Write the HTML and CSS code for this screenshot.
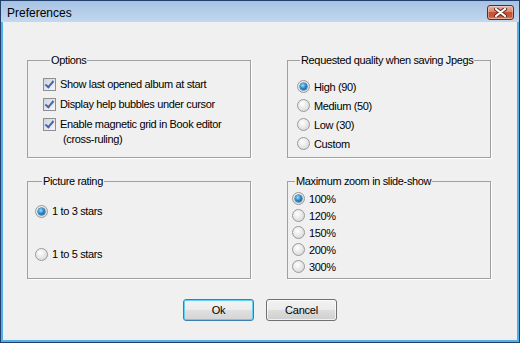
FILE: index.html
```html
<!DOCTYPE html>
<html lang="en">
<head>
    <meta charset="UTF-8">
    <title>Preferences</title>
    <link rel="stylesheet" href="styles.css">
</head>
<body>
    <div class="window">
        <div class="titlebar">
            <span class="title">Preferences</span>
            <span class="close-btn">
                <svg width="13" height="9" viewBox="0 0 13 9">
                    <path d="M2 1 L11 8 M11 1 L2 8" stroke="#5a2a22" stroke-width="4" stroke-linecap="round"/>
                    <path d="M2 1 L11 8 M11 1 L2 8" stroke="#fff" stroke-width="2.2" stroke-linecap="round"/>
                </svg>
            </span>
        </div>

        <div class="client">
            <div class="groups">
                <fieldset class="group options">
                    <legend>Options</legend>
                    <div class="check-row"><span class="checkbox"></span><span class="text">Show last opened album at start</span></div>
                    <div class="check-row"><span class="checkbox"></span><span class="text">Display help bubbles under cursor</span></div>
                    <div class="check-row"><span class="checkbox"></span><span class="text two-line">Enable magnetic grid in Book editor<br><span class="indent">(cross-ruling)</span></span></div>
                </fieldset>

                <fieldset class="group right quality">
                    <legend>Requested quality when saving Jpegs</legend>
                    <div class="radio-row"><span class="radio on"></span>High (90)</div>
                    <div class="radio-row"><span class="radio"></span>Medium (50)</div>
                    <div class="radio-row"><span class="radio"></span>Low (30)</div>
                    <div class="radio-row"><span class="radio"></span>Custom</div>
                </fieldset>

                <fieldset class="group rating">
                    <legend>Picture rating</legend>
                    <div class="radio-row"><span class="radio on"></span>1 to 3 stars</div>
                    <div class="radio-row"><span class="radio"></span>1 to 5 stars</div>
                </fieldset>

                <fieldset class="group right zoom">
                    <legend>Maximum zoom in slide-show</legend>
                    <div class="radio-row"><span class="radio on"></span>100%</div>
                    <div class="radio-row"><span class="radio"></span>120%</div>
                    <div class="radio-row"><span class="radio"></span>150%</div>
                    <div class="radio-row"><span class="radio"></span>200%</div>
                    <div class="radio-row"><span class="radio"></span>300%</div>
                </fieldset>
            </div>

            <div class="buttons">
                <button class="btn default">Ok</button>
                <button class="btn">Cancel</button>
            </div>
        </div>
    </div>
</body>
</html>
```

FILE: styles.css
```css
html, body { margin: 0; padding: 0; }
body { width: 520px; height: 343px; font-family: "Liberation Sans", Arial, sans-serif; font-size: 11px; letter-spacing: -0.35px; color: #000; }

.window { box-sizing: border-box; width: 520px; height: 343px; border: 1px solid #23406c; background: #52b0e6; display: flex; flex-direction: column; }
.titlebar { height: 21px; display: flex; justify-content: space-between; align-items: flex-start; background: linear-gradient(#a6c2e3, #c3d8f0); }
.title { font-size: 12px; line-height: 14px; letter-spacing: 0; margin: 5px 0 0 6px; color: #000; }
.close-btn { box-sizing: border-box; width: 27px; height: 15px; margin: 4px 5px 0 0; border: 1px solid #6b261a; border-radius: 3px;
    background: linear-gradient(#eab1a3, #d98470 45%, #c8502f 50%, #c9583a 80%, #e08c6d);
    box-shadow: inset 0 0 0 1px rgba(255,255,255,0.35);
    display: flex; align-items: center; justify-content: center; }

.client { flex: 1; margin: 0 2px 2px 2px; background: #f0f0f0; }

.groups { display: grid; grid-template-columns: 224px 204px; grid-template-rows: 104px 104px; column-gap: 36px; row-gap: 17px; padding: 32px 0 0 24px; }

.group { margin: 0; padding: 0; min-width: 0; border: 1px solid #a0a0a0; box-shadow: 1px 1px 0 #fff; }
.group legend { padding: 0 1px; margin-left: 7px; line-height: 13px; }
.group.right legend { margin-left: 3px; }

.options { padding: 8px 0 0 15px; }
.check-row { display: flex; align-items: flex-start; min-height: 20px; }
.check-row .text { line-height: 13px; padding-top: 3px; margin-left: 4px; }
.check-row .two-line { line-height: 15px; padding-top: 2px; }
.indent { padding-left: 3px; }

.checkbox { box-sizing: border-box; width: 13px; height: 13px; margin-top: 3px; border: 1px solid #8e8f8f; background: linear-gradient(135deg, #cfd3d8, #f7f7f7); position: relative; flex: none; }
.checkbox::after { content: ""; position: absolute; left: 3px; top: 0px; width: 3px; height: 7px; border: solid #4468b4; border-width: 0 2px 2px 0; transform: rotate(40deg); }

.radio-row { display: flex; align-items: center; height: 19px; }
.radio { box-sizing: border-box; width: 13px; height: 13px; border-radius: 50%; border: 1px solid #9a9a9a; background: radial-gradient(circle at 40% 35%, #fff, #dedede 70%, #c9c9c9); margin-right: 4px; flex: none; position: relative; }
.radio.on::after { content: ""; position: absolute; left: 2px; top: 2px; width: 7px; height: 7px; border-radius: 50%; background: radial-gradient(circle at 40% 35%, #9fe0ff, #1f86c8 50%, #0b4f8a); box-shadow: 0 0 0 0.5px #174f80; }

.quality { padding: 10px 0 0 9px; }
.rating { padding: 13px 0 0 7px; }
.rating .radio-row { height: 20px; }
.rating .radio-row + .radio-row { margin-top: 23px; }
.zoom { padding: 2px 0 0 4px; }
.zoom .radio-row { height: 17px; }

.buttons { display: flex; justify-content: center; gap: 12px; margin-top: 20px; }
.btn { box-sizing: border-box; width: 71px; height: 22px; padding: 0; font-family: "Liberation Sans", Arial, sans-serif; font-size: 11px; letter-spacing: -0.2px; color: #000;
    border: 1px solid #707070; border-radius: 3px;
    background: linear-gradient(#f2f2f2, #ebebeb 50%, #dddddd 50%, #cfcfcf);
    box-shadow: inset 0 0 0 1px rgba(255,255,255,0.7); }
.btn.default { border-color: #3c7fb1; box-shadow: inset 0 0 0 1px #5fd0f7; background: linear-gradient(#f4f4f4, #ececec 50%, #e0e0e0 50%, #d4d4d4); }
```
